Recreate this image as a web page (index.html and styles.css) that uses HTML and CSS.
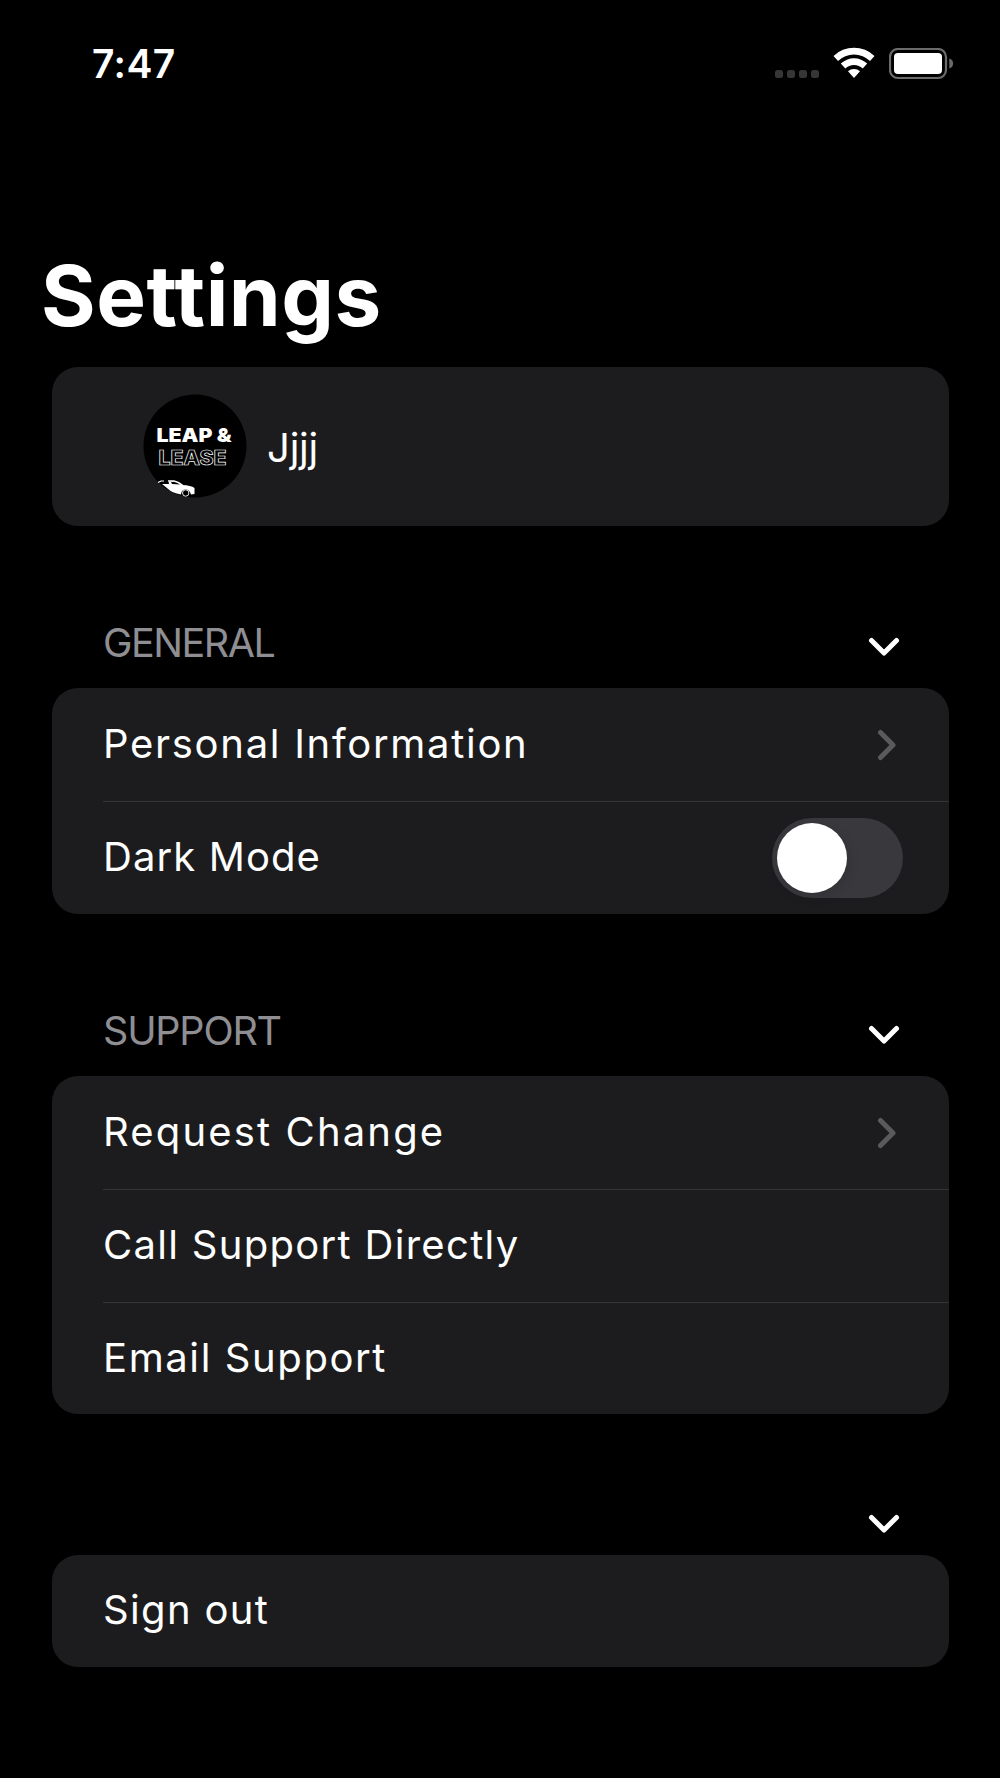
FILE: index.html
```html
<!DOCTYPE html>
<html lang="en">
<head>
  <meta charset="UTF-8">
  <title>Settings</title>
  <link rel="stylesheet" href="styles.css">
</head>
<body>

  <header class="status-bar">
    <span class="time">7:47</span>
    <div class="status-icons">
      <div class="signal"><i></i><i></i><i></i><i></i></div>
      <svg class="wifi" width="42" height="32" viewBox="0 0 42 32">
        <path d="M0.5 9 A29.5 29.5 0 0 1 41.5 9 L37 14 A23 23 0 0 0 5 14 Z" fill="#fff"/>
        <path d="M7.8 16.6 A19 19 0 0 1 34.2 16.6 L29.7 21.6 A12.5 12.5 0 0 0 12.3 21.6 Z" fill="#fff"/>
        <path d="M15 24.2 A9 9 0 0 1 27 24.2 L21 31 Z" fill="#fff"/>
      </svg>
      <svg class="battery" width="65" height="32" viewBox="0 0 65 32">
        <rect x="1" y="1" width="56" height="29" rx="8" fill="none" stroke="#6b6b6b" stroke-width="2.2"/>
        <rect x="5" y="5" width="48" height="21" rx="4" fill="#fff"/>
        <path d="M60.3 10.5 A5.2 5.2 0 0 1 60.3 20.5 Z" fill="#6b6b6b"/>
      </svg>
    </div>
  </header>

  <h1 class="title">Settings</h1>

  <main class="settings">
    <div class="card profile">
      <svg class="avatar" width="104" height="104" viewBox="0 0 104 104">
        <circle cx="52" cy="52" r="51.5" fill="#000"/>
        <text class="logo-top" x="13.5" y="47.5" textLength="75" lengthAdjust="spacingAndGlyphs">LEAP &amp;</text>
        <text class="logo-bottom" x="15.5" y="71" textLength="68" lengthAdjust="spacingAndGlyphs">LEASE</text>
        <!-- car -->
        <path d="M19 90 H26 L25.5 87.2 H32 Q36.5 88.5 39 91 Q48 91.3 51.5 94 V100 L48 100.5 Q46.5 95.5 42.5 95.5 Q38.5 95.5 38 100.5 Q29 99 24.5 94.5 Z" fill="#fff"/>
        <path d="M15 88.5 L18 87 H21 M25 86.8 H31 Q36 88 40 91.5" fill="none" stroke="#fff" stroke-width="1.2"/>
        <path d="M28 88 H31.5 Q34.5 88.8 37 90.5 L29 90 Z" fill="#000"/>
        <circle cx="42.7" cy="99" r="3.2" fill="#000" stroke="#fff" stroke-width="0.9"/>
      </svg>
      <span class="name">Jjjj</span>
    </div>

    <div class="section-header">
      <span class="general">GENERAL</span>
      <svg class="chevron-down" width="32" height="20" viewBox="0 0 32 20"><path d="M3.5 3.5 L16 16 L28.5 3.5"/></svg>
    </div>
    <div class="card">
      <div class="row">
        <span class="personal">Personal Information</span>
        <svg class="chevron-right" width="20" height="32" viewBox="0 0 20 32"><path d="M3.5 3.5 L16 16 L3.5 28.5"/></svg>
      </div>
      <div class="row">
        <span class="dark">Dark Mode</span>
        <div class="toggle"><div class="knob"></div></div>
      </div>
    </div>

    <div class="section-header">
      <span class="support">SUPPORT</span>
      <svg class="chevron-down" width="32" height="20" viewBox="0 0 32 20"><path d="M3.5 3.5 L16 16 L28.5 3.5"/></svg>
    </div>
    <div class="card">
      <div class="row">
        <span class="request">Request Change</span>
        <svg class="chevron-right" width="20" height="32" viewBox="0 0 20 32"><path d="M3.5 3.5 L16 16 L3.5 28.5"/></svg>
      </div>
      <div class="row"><span class="call">Call Support Directly</span></div>
      <div class="row"><span class="email">Email Support</span></div>
    </div>

    <div class="section-header untitled">
      <svg class="chevron-down" width="32" height="20" viewBox="0 0 32 20"><path d="M3.5 3.5 L16 16 L28.5 3.5"/></svg>
    </div>
    <div class="card">
      <div class="row"><span class="signout">Sign out</span></div>
    </div>
  </main>

</body>
</html>
```

FILE: styles.css
```css
* {
  box-sizing: border-box;
}

body {
  margin: 0;
  height: 1778px;
  overflow: hidden;
  background-color: #000;
  color: #fff;
  font-family: Inter, 'Liberation Sans', sans-serif;
}

.status-bar {
  display: flex;
  justify-content: space-between;
  height: 100px;
  padding: 40px 46px 0 92px;
}

.time {
  font-size: 39px;
  font-weight: 600;
  line-height: 48px;
  letter-spacing: 0.4px;
}

.status-icons {
  display: flex;
  align-items: flex-start;
  padding-top: 7px;
}

.signal {
  display: flex;
  gap: 4px;
  margin: 23px 14px 0 0;
}

.signal i {
  width: 8px;
  height: 8px;
  border-radius: 2.5px;
  background-color: #363636;
}

.battery {
  margin: 1px 0 0 14px;
}

.title {
  margin: 146px 0 0 41px;
  height: 121px;
  font-size: 83.5px;
  font-weight: 700;
  line-height: 100px;
  letter-spacing: 0.5px;
}

.settings {
  margin: 0 51.5px;
}

.card {
  background-color: #1c1c1e;
  border-radius: 26px;
  padding-left: 51.5px;
}

.profile {
  display: flex;
  align-items: center;
  height: 158.5px;
  padding-left: 91.5px;
  font-size: 40px;
}

.name {
  margin-left: 20px;
  padding-top: 2px;
  letter-spacing: -0.2px;
}

.section-header {
  display: flex;
  align-items: center;
  justify-content: space-between;
  height: 90px;
  margin-top: 72.7px;
  padding: 0 49px 0 51.5px;
  font-size: 39.5px;
  font-weight: 400;
  color: #8e8e93;
}

.card + .untitled {
  justify-content: flex-end;
  height: 62px;
  margin-top: 78.3px;
}

.chevron-down {
  margin-top: 7px;
  fill: none;
  stroke: #fff;
  stroke-width: 5;
  stroke-linecap: round;
  stroke-linejoin: round;
}

.untitled .chevron-down {
  margin-top: 1px;
}

.row {
  display: flex;
  align-items: center;
  justify-content: space-between;
  height: 112.7px;
  padding-right: 46px;
  font-size: 40px;
}

.row span {
  margin-bottom: 2px;
}

.row + .row {
  border-top: 1px solid #343436;
}

.general { letter-spacing: -1.5px; }
.support { letter-spacing: -1.2px; }
.personal { letter-spacing: 1.7px; }
.dark { letter-spacing: 1.1px; }
.request { letter-spacing: 2.15px; }
.call { letter-spacing: 1.3px; }
.email { letter-spacing: 1.6px; }
.signout { letter-spacing: 1.35px; }

.chevron-right {
  margin-right: 5.5px;
  fill: none;
  stroke: #5a5a5c;
  stroke-width: 5;
  stroke-linecap: round;
  stroke-linejoin: round;
}

.toggle {
  width: 130.5px;
  height: 80px;
  padding: 5px;
  border-radius: 40px;
  background-color: #39393d;
}

.knob {
  width: 70px;
  height: 70px;
  border-radius: 50%;
  background-color: #fff;
  box-shadow: 2px 4px 12px rgba(0, 0, 0, 0.12);
}

.logo-top {
  font-size: 19px;
  font-weight: 900;
  fill: #fff;
}

.logo-bottom {
  font-size: 20px;
  font-weight: 800;
  fill: none;
  stroke: #fff;
  stroke-width: 0.7;
}
```
